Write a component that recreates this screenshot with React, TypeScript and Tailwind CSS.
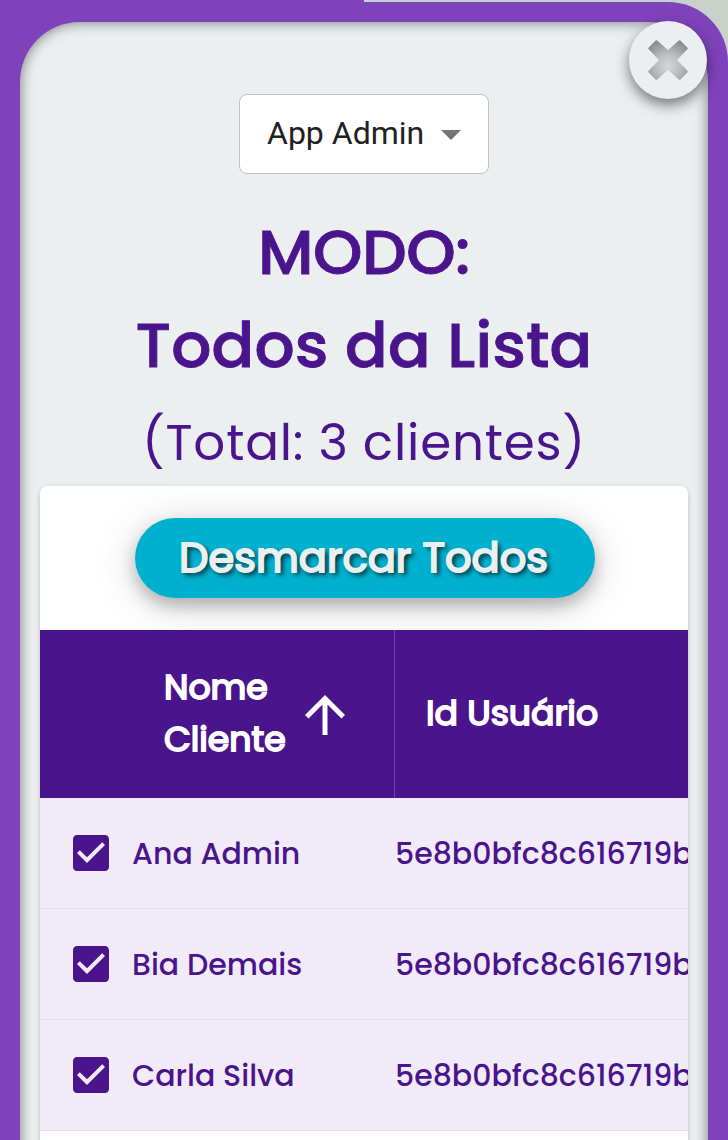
const clients = [
  { name: "Ana Admin", id: "5e8b0bfc8c616719b" },
  { name: "Bia Demais", id: "5e8b0bfc8c616719b" },
  { name: "Carla Silva", id: "5e8b0bfc8c616719b" },
];

function CloseButton() {
  return (
    <button
      aria-label="Fechar"
      className="absolute right-[1px] top-[-1px] flex size-[78px] items-center justify-center rounded-full bg-[#ebeff0] shadow-[0_6px_14px_rgba(0,0,0,0.5)]"
    >
      <svg width="42" height="42" viewBox="-1 -1 42 42">
        <defs>
          <radialGradient id="xfill" gradientUnits="userSpaceOnUse" cx="20" cy="26" r="26">
            <stop offset="0" stopColor="#d3d7d8" />
            <stop offset="0.45" stopColor="#bbbfc0" />
            <stop offset="1" stopColor="#8d908f" />
          </radialGradient>
        </defs>
        <path
          d="M8.5 1.500 1.500 8.500 12.500 20 1.500 31.500 8.500 38.500 20 28 31.500 38.500 38.500 31.500 27.500 20 38.500 8.500 31.500 1.500 20 12Z"
          fill="url(#xfill)"
          stroke="url(#xfill)"
          strokeWidth="2.500"
          strokeLinejoin="round"
        />
      </svg>
    </button>
  );
}

function CheckedBox() {
  return (
    <svg width="48" height="48" viewBox="0 0 24 24" fill="#4a148c" className="shrink-0">
      <path d="M19 3H5c-1.110 0-2 .9-2 2v14c0 1.100.89 2 2 2h14c1.110 0 2-.9 2-2V5c0-1.100-.89-2-2-2zm-9 14l-5-5 1.410-1.410L10 14.170l7.590-7.590L19 8l-9 9z" />
    </svg>
  );
}

export default function App() {
  return (
    <div className="flex h-[1140px] w-[728px] flex-col overflow-hidden bg-[#c9d2c8] font-['Poppins','Inter',sans-serif] text-[#4a148c]">
      <div className="h-[2px] w-1/2 shrink-0 bg-[#7e43ba]" />
      <div className="flex-1 bg-linear-to-r from-[#7e43ba] from-50% to-transparent to-50%">
        <div className="h-full rounded-tr-[60px] bg-[#7e43ba] px-5 pt-5">
          <main className="relative flex h-[1160px] flex-col rounded-t-[60px] bg-[#ebeff0] px-5 pt-[72px] shadow-[inset_0_0_14px_rgba(0,0,0,0.5)]">
            <CloseButton />

            <button className="mx-auto flex h-[80px] w-[250px] shrink-0 items-center rounded-[8px] border border-[#c2c2c2] bg-white pb-[2px] pl-[27px] font-['Roboto',sans-serif] text-[32px] text-[#212121]">
              <span className="w-[158px] text-left whitespace-nowrap">App Admin</span>
              <svg width="20" height="10" viewBox="0 0 20 10" className="ml-[16px] mt-[3px]" fill="#757575">
                <path d="M0 0h20L10 10z" />
              </svg>
            </button>

            <h1 className="mt-[32px] text-center text-[63px] font-medium leading-[93px] [-webkit-text-stroke:0.9px_#4a148c]">
              <span className="tracking-[-0.5px]">MODO:</span>
              <br />
              <span className="tracking-[0.15px]">Todos da Lista</span>
            </h1>
            <p className="mt-[7px] text-center text-[50px] leading-[87px] tracking-[0.8px]">(Total: 3 clientes)</p>

            <section className="flex-1 rounded-[8px] bg-white shadow-[0_2px_6px_rgba(0,0,0,0.15),0_4px_4px_rgba(0,0,0,0.06)]">
              <div className="overflow-hidden rounded-t-[8px]">
                <div className="flex h-[144px] items-center justify-center pl-px">
                  <button className="flex h-[80px] w-[460px] items-center justify-center rounded-full bg-[#00b1cf] pr-[2px] text-[41.6px] text-[#ebeff0] shadow-[0_8px_16px_rgba(0,0,0,0.22),0_6px_40px_rgba(0,0,0,0.18)] [-webkit-text-stroke:1.9px_#ebeff0] [text-shadow:3px_3px_5px_rgba(0,0,0,0.9)]">
                    Desmarcar Todos
                  </button>
                </div>
                <div className="relative flex h-[168px] bg-[#4a148c] text-[34.7px] leading-[52px] text-white [-webkit-text-stroke:1.8px_#fff]">
                  <div className="flex w-[355px] items-center border-r border-[#6f45a3] pl-[124px]">
                    <span className="w-[123px] pb-[3px]">
                      Nome
                      <br />
                      Cliente
                    </span>
                    <svg width="60" height="60" viewBox="0 0 24 24" fill="#fff" className="ml-[8px] mt-[2px] shrink-0">
                      <path stroke="none" d="M4 12l1.410 1.410L11 7.830V20h2V7.830l5.580 5.590L20 12l-8-8-8 8z" />
                    </svg>
                  </div>
                  <div className="flex items-center pb-[3px] pl-[31px]">Id Usuário</div>
                </div>
                {clients.map((client) => (
                  <div
                    key={client.name}
                    className="flex h-[111px] items-center overflow-hidden border-b border-[#e1dfe3] bg-[#f1ebf7] text-[30px] font-medium whitespace-nowrap"
                  >
                    <div className="flex w-[355px] shrink-0 items-center pl-[27px]">
                      <CheckedBox />
                      <span className="ml-[17px] pt-px">{client.name}</span>
                    </div>
                    <span className="pt-px">{client.id}</span>
                  </div>
                ))}
              </div>
            </section>
          </main>
        </div>
      </div>
    </div>
  );
}
